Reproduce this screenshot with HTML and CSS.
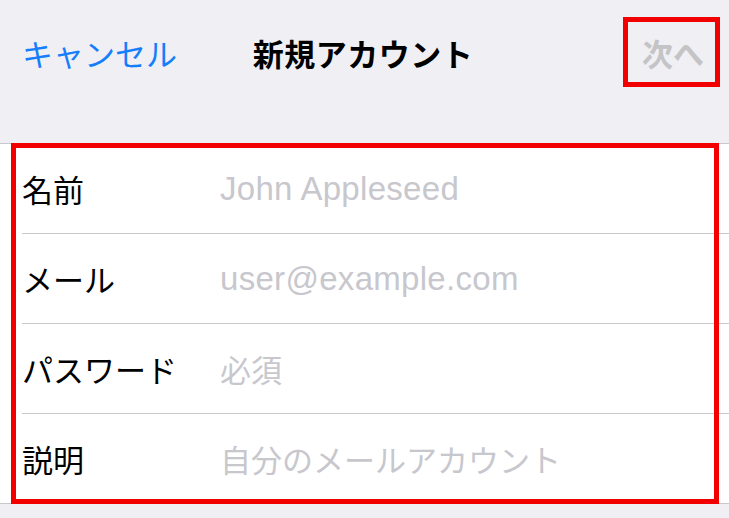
FILE: index.html
```html
<!DOCTYPE html>
<html lang="ja">
<head>
<meta charset="utf-8">
<title>新規アカウント</title>
<link rel="stylesheet" href="styles.css">
</head>
<body>
<header class="navbar">
  <div class="nav-left"><span class="cancel">キャンセル</span></div>
  <div class="nav-title">新規アカウント</div>
  <div class="nav-right"><span class="next">次へ</span></div>
</header>
<section class="form">
  <div class="row">
    <span class="label">名前</span>
    <span class="placeholder latin">John Appleseed</span>
  </div>
  <div class="row">
    <span class="label">メール</span>
    <span class="placeholder latin">user@example.com</span>
  </div>
  <div class="row">
    <span class="label">パスワード</span>
    <span class="placeholder">必須</span>
  </div>
  <div class="row">
    <span class="label">説明</span>
    <span class="placeholder">自分のメールアカウント</span>
  </div>
</section>
</body>
</html>
```

FILE: styles.css
```css
* { box-sizing: border-box; }
html, body {
  margin: 0;
  padding: 0;
}
body {
  width: 729px;
  height: 518px;
  overflow: hidden;
  background: #efeff4;
  font-family: "Noto Sans CJK JP", "Noto Sans", sans-serif;
  font-size: 31px;
  color: #000;
}
.navbar {
  height: 104px;
  display: grid;
  grid-template-columns: 1fr auto 1fr;
  align-items: center;
  padding-left: 22px;
  padding-right: 9px;
}
.nav-left { justify-self: start; }
.nav-right { justify-self: end; }
.cancel {
  color: #157efb;
}
.nav-title {
  font-weight: 700;
  margin-right: 16px;
  letter-spacing: 0.5px;
}
.next {
  display: flex;
  align-items: center;
  height: 70px;
  padding: 0 11px 0 14px;
  border: 5px solid #f20000;
  color: #c4c4c7;
  font-weight: 700;
}
.form {
  position: relative;
  margin-top: 39px;
  background: #fff;
  border-top: 1px solid #c8c7cc;
  border-bottom: 1px solid #c8c7cc;
}
.form::after {
  content: "";
  position: absolute;
  left: 11px;
  right: 10px;
  top: -1px;
  bottom: -1px;
  border: 5px solid #f20000;
  pointer-events: none;
}
.row {
  height: 90px;
  margin-left: 22px;
  display: flex;
  align-items: center;
  border-bottom: 1px solid #c8c7cc;
}
.row:last-child {
  height: 89px;
  border-bottom: none;
}
.label {
  width: 198px;
  flex: none;
}
.placeholder {
  color: #c7c7cd;
}
.latin {
  font-family: "Liberation Sans", Arial, sans-serif;
  font-size: 33px;
  letter-spacing: 0.3px;
}
```
